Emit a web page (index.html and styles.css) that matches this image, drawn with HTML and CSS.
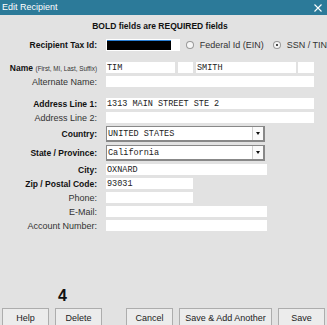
FILE: index.html
```html
<!DOCTYPE html>
<html lang="en">
<head>
    <meta charset="UTF-8">
    <meta name="viewport" content="width=device-width, initial-scale=1.0">
    <title>Edit Recipient</title>
    <link rel="stylesheet" href="styles.css">
</head>
<body>
    <div class="dialog">
        <div class="titlebar">
            <span>Edit Recipient</span>
            <svg class="close" width="8" height="8" viewBox="0 0 8 8">
                <path d="M0.5 0.5 L7.5 7.5 M7.5 0.5 L0.5 7.5" stroke="#fff" stroke-width="1.1" fill="none"/>
            </svg>
        </div>

        <form class="form" name="recipientForm">
            <p class="notice">BOLD fields are REQUIRED fields</p>

            <div class="row tall">
                <label class="req">Recipient Tax Id:</label>
                <div class="tax-input"><span class="redacted"></span></div>
                <span class="radio"></span>
                <span class="radio-text">Federal Id (EIN)</span>
                <span class="radio checked"></span>
                <span class="radio-text">SSN / TIN</span>
            </div>

            <!-- name parts -->
            <div class="row gap-big">
                <label><b>Name</b> <small>(First, MI, Last, Suffix)</small></label>
                <input class="w-first" type="text" value="TIM">
                <input class="w-mi" type="text">
                <input class="w-last" type="text" value="SMITH">
                <input class="w-suffix" type="text">
            </div>
            <div class="row">
                <label>Alternate Name:</label>
                <input class="w-full" type="text">
            </div>

            <div class="row gap-big">
                <label class="req">Address Line 1:</label>
                <input class="w-full" type="text" value="1313 MAIN STREET STE 2">
            </div>
            <div class="row">
                <label>Address Line 2:</label>
                <input class="w-full" type="text">
            </div>

            <div class="row select-row">
                <label class="req">Country:</label>
                <div class="select"><span>UNITED STATES</span><span class="arrow"></span></div>
            </div>
            <div class="row select-row">
                <label class="req">State / Province:</label>
                <div class="select"><span>California</span><span class="arrow"></span></div>
            </div>

            <div class="row">
                <label class="req">City:</label>
                <input class="w-mid" type="text" value="OXNARD">
            </div>
            <div class="row">
                <label class="req">Zip / Postal Code:</label>
                <input class="w-short zip" type="text" value="93031">
            </div>
            <div class="row">
                <label>Phone:</label>
                <input class="w-short" type="text">
            </div>
            <div class="row">
                <label>E-Mail:</label>
                <input class="w-mid" type="text">
            </div>
            <div class="row">
                <label>Account Number:</label>
                <input class="w-mid" type="text">
            </div>
        </form>

        <div class="footer">
            <div class="note">4</div>
            <div class="buttons">
                <button type="button" class="btn">Help</button>
                <button type="button" class="btn">Delete</button>
                <button type="button" class="btn push">Cancel</button>
                <button type="button" class="btn wide">Save &amp; Add Another</button>
                <button type="button" class="btn">Save</button>
            </div>
        </div>
    </div>
</body>
</html>
```

FILE: styles.css
```css
html, body {
    margin: 0;
    overflow: hidden;
}
body {
    background-color: #e2e2e2;
    font-family: "Liberation Sans", Arial, sans-serif;
    font-size: 9px;
    color: #333;
}
.dialog {
    height: 325px;
    display: flex;
    flex-direction: column;
    overflow: hidden;
}
.titlebar {
    height: 15px;
    background-color: #2c7a99;
    color: #fff;
    line-height: 15px;
    padding: 0 3px 0 2px;
    display: flex;
    justify-content: space-between;
    align-items: center;
}
.close {
    margin-right: 2px;
}
.form {
    margin: 0;
    padding-top: 5px;
    display: flex;
    flex-direction: column;
    gap: 3px;
}
.notice {
    margin: 0 0 4px;
    text-align: center;
    padding-right: 7px;
    font-weight: bold;
    font-size: 8.5px;
    line-height: 12px;
    color: #111;
}
.row {
    display: flex;
    align-items: center;
    height: 11px;
}
.row.tall {
    height: 12px;
}
.row.gap-big {
    margin-top: 8px;
}
.row.select-row {
    height: 16px;
}
label {
    width: 97px;
    margin-right: 9px;
    text-align: right;
    white-space: nowrap;
    flex-shrink: 0;
}
label.req, label b {
    font-weight: bold;
    font-size: 8.5px;
    color: #111;
}
label small {
    font-size: 6.3px;
    color: #333;
}
input[type="text"] {
    height: 11px;
    box-sizing: border-box;
    border: none;
    background-color: #fff;
    padding: 0 1px;
    margin: 0 3px 0 0;
    font-family: "Liberation Mono", "Courier New", monospace;
    font-size: 8.5px;
    color: #222;
    outline: none;
}
.w-first { width: 69px; }
.w-mi { width: 15px; }
.w-last { width: 100px; margin-right: 2px !important; }
.w-suffix { width: 16px; }
.w-full { width: 208px; }
.w-mid { width: 161px; }
.w-short { width: 87px; }
.zip {
    color: #555;
}
.tax-input {
    width: 76px;
    height: 12px;
    background-color: #fff;
    box-sizing: border-box;
    padding: 1px 9px 1px 1px;
}
.redacted {
    display: block;
    height: 10px;
    background-color: #000;
    border-top: 1px solid #2a7fd4;
    box-sizing: border-box;
}
.radio {
    width: 8px;
    height: 8px;
    box-sizing: border-box;
    border: 1px solid #9a9a9a;
    border-radius: 50%;
    background-color: #f6f6f6;
    margin-left: 6px;
    margin-right: 6px;
    position: relative;
}
.radio.checked {
    margin-left: 9px;
}
.radio.checked::after {
    content: "";
    position: absolute;
    left: 2px;
    top: 2px;
    width: 2px;
    height: 2px;
    border-radius: 50%;
    background-color: #111;
}
.radio-text {
    white-space: nowrap;
}
.select {
    width: 159px;
    height: 16px;
    box-sizing: border-box;
    border: 1px solid #888;
    border-right-width: 2px;
    border-bottom-width: 2px;
    background-color: #fff;
    display: flex;
    align-items: center;
    justify-content: space-between;
    padding-left: 1px;
    font-family: "Liberation Mono", "Courier New", monospace;
    font-size: 8.5px;
    color: #222;
}
.arrow {
    width: 10px;
    height: 100%;
    border-left: 1px solid #cfcfcf;
    background-color: #fafafa;
    position: relative;
}
.arrow::after {
    content: "";
    position: absolute;
    left: 3px;
    top: 5px;
    border-left: 2.5px solid transparent;
    border-right: 2.5px solid transparent;
    border-top: 3px solid #111;
}
.footer {
    margin-top: auto;
    margin-bottom: -3px;
}
.note {
    padding-left: 58px;
    font-size: 16px;
    font-weight: bold;
    color: #111;
    line-height: 16px;
    margin-bottom: 4px;
}
.buttons {
    display: flex;
    gap: 6px;
    padding: 0 2px;
}
.btn {
    width: 47px;
    height: 20px;
    padding: 0;
    margin: 0;
    border: 1px solid #adadad;
    background-color: #ececec;
    font-family: "Liberation Sans", Arial, sans-serif;
    font-size: 9px;
    color: #222;
    cursor: pointer;
}
.btn.push {
    margin-left: auto;
}
.btn.wide {
    width: 93px;
}
```
